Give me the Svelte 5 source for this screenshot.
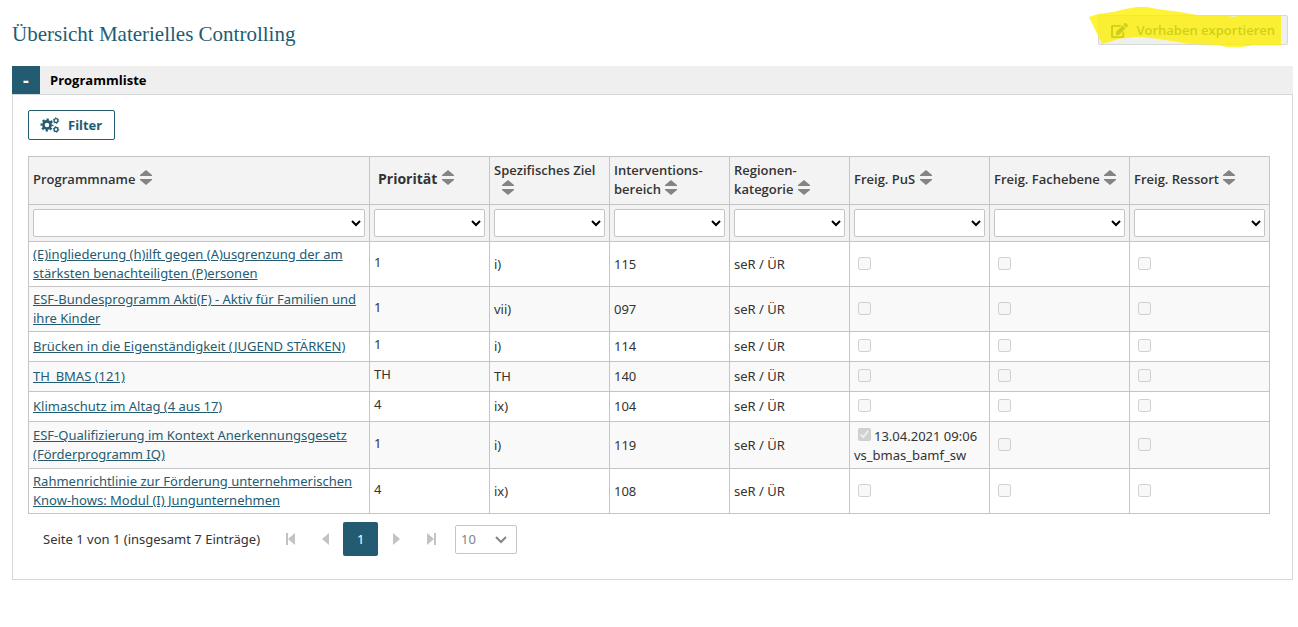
<script>
    const columns = [
        { key: "name", lines: ["Programmname"] },
        { key: "prio", lines: ["Priorität"] },
        { key: "ziel", lines: ["Spezifisches Ziel", "\u00a0"] },
        { key: "bereich", lines: ["Interventions-", "bereich"] },
        { key: "region", lines: ["Regionen-", "kategorie"] },
        { key: "pus", lines: ["Freig. PuS"] },
        { key: "fach", lines: ["Freig. Fachebene"] },
        { key: "ressort", lines: ["Freig. Ressort"] },
    ]

    const rows = [
        { name: ["(E)ingliederung (h)ilft gegen (A)usgrenzung der am", "stärksten benachteiligten (P)ersonen"], prio: "1", ziel: "i)", bereich: "115" },
        { name: ["ESF-Bundesprogramm Akti(F) - Aktiv für Familien und", "ihre Kinder"], prio: "1", ziel: "vii)", bereich: "097" },
        { name: ["Brücken in die Eigenständigkeit (JUGEND STÄRKEN)"], prio: "1", ziel: "i)", bereich: "114" },
        { name: ["TH_BMAS (121)"], prio: "TH", ziel: "TH", bereich: "140" },
        { name: ["Klimaschutz im Altag (4 aus 17)"], prio: "4", ziel: "ix)", bereich: "104" },
        { name: ["ESF-Qualifizierung im Kontext Anerkennungsgesetz", "(Förderprogramm IQ)"], prio: "1", ziel: "i)", bereich: "119", pus: ["13.04.2021 09:06", "vs_bmas_bamf_sw"] },
        { name: ["Rahmenrichtlinie zur Förderung unternehmerischen", "Know-hows: Modul (I) Jungunternehmen"], prio: "4", ziel: "ix)", bereich: "108" },
    ]

    let open = $state(true)
</script>

{#snippet sortIcon()}
    <svg class="sort" viewBox="0 0 12 15" width="12" height="15" aria-hidden="true">
        <path d="M6 0L12 5V6H0V5Z M0 9H12V10L6 15L0 10Z" />
    </svg>
{/snippet}

<main>
    <header class="top">
        <h1>Übersicht Materielles Controlling</h1>
        <div class="export-wrapper">
            <button class="export" disabled>
                <svg viewBox="0 0 576 512" width="17" height="15" aria-hidden="true">
                    <path d="M402.6 83.2l90.2 90.2c3.8 3.8 3.8 10 0 13.8L274.4 405.6l-92.8 10.3c-12.4 1.4-22.9-9.1-21.5-21.5l10.3-92.8L388.8 83.2c3.8-3.8 10-3.8 13.8 0zm162-22.9l-48.8-48.8c-15.2-15.2-39.9-15.2-55.2 0l-35.4 35.4c-3.8 3.8-3.8 10 0 13.8l90.2 90.2c3.8 3.8 10 3.8 13.8 0l35.4-35.4c15.2-15.3 15.2-40 0-55.2zM384 346.2V448H64V128h229.8c3.2 0 6.2-1.3 8.5-3.5l40-40c7.6-7.6 2.2-20.5-8.5-20.5H48C21.5 64 0 85.5 0 112v352c0 26.5 21.5 48 48 48h352c26.5 0 48-21.5 48-48V306.2c0-10.7-12.9-16-20.5-8.5l-40 40c-2.2 2.3-3.5 5.3-3.5 8.5z" />
                </svg>
                Vorhaben exportieren
            </button>
            <!-- marker stroke over the button -->
            <svg class="marker" viewBox="0 0 192 41" width="192" height="41" aria-hidden="true">
                <path d="M0 10L9 7L24 5L36 2L48 0H58L68 2L91 5L108 8H133L140 9L144 10L148 9L156 8H192V38H166L153 40H138L128 38L101 37L76 33L62 31L53 30H46L29 32L20 35L13 37Z" />
            </svg>
        </div>
    </header>

    <section>
        <div class="bar">
            <button class="toggle" aria-label="Programmliste ein- oder ausklappen" onclick={() => (open = !open)}>{open ? "-" : "+"}</button>
            <h2>Programmliste</h2>
        </div>

        {#if open}
            <div class="panel">
                <button class="filter">
                    <svg viewBox="0 0 20 16" width="20" height="16" aria-hidden="true">
                        <g fill="none">
                            <circle cx="7" cy="8" r="3.6" stroke-width="2.6" />
                            <circle cx="7" cy="8" r="5.5" stroke-width="2" stroke-dasharray="2.3 2.02" stroke-dashoffset="1.15" />
                            <circle cx="16" cy="3.6" r="1.9" stroke-width="1.3" />
                            <circle cx="16" cy="3.6" r="2.8" stroke-width="1" stroke-dasharray="1.3 1.63" />
                            <circle cx="16" cy="12.4" r="1.9" stroke-width="1.3" />
                            <circle cx="16" cy="12.4" r="2.8" stroke-width="1" stroke-dasharray="1.3 1.63" />
                        </g>
                    </svg>
                    Filter
                </button>

                <table>
                    <colgroup>
                        {#each columns as col}
                            <col class={col.key} />
                        {/each}
                    </colgroup>
                    <thead>
                        <tr class="titles">
                            {#each columns as col}
                                <th class={col.key} scope="col">
                                    {#each col.lines as line, i}
                                        {#if i > 0}<br />{/if}{line}
                                    {/each}
                                    {@render sortIcon()}
                                </th>
                            {/each}
                        </tr>
                        <tr class="filters">
                            {#each columns as col}
                                <td>
                                    <select aria-label={col.lines.join(" ")}><option></option></select>
                                </td>
                            {/each}
                        </tr>
                    </thead>
                    <tbody>
                        {#each rows as row}
                            <tr>
                                <td>
                                    <a href="#programm">{row.name[0]}{#if row.name[1]}<br />{row.name[1]}{/if}</a>
                                </td>
                                <td class="prio">{row.prio}</td>
                                <td>{row.ziel}</td>
                                <td>{row.bereich}</td>
                                <td>seR / ÜR</td>
                                <td>
                                    {#if row.pus}
                                        <label><input type="checkbox" checked disabled />{row.pus[0]}<br />{row.pus[1]}</label>
                                    {:else}
                                        <input type="checkbox" aria-label="Freig. PuS" disabled />
                                    {/if}
                                </td>
                                <td><input type="checkbox" aria-label="Freig. Fachebene" disabled /></td>
                                <td><input type="checkbox" aria-label="Freig. Ressort" disabled /></td>
                            </tr>
                        {/each}
                    </tbody>
                </table>

                <nav>
                    <span class="count">Seite 1 von 1 (insgesamt 7 Einträge)</span>
                    <button class="page" aria-label="Erste Seite" disabled>
                        <svg viewBox="0 0 10 12" width="10" height="12"><path d="M0 0H2V12H0Z M9 0V12L2 6Z" /></svg>
                    </button>
                    <button class="page" aria-label="Vorherige Seite" disabled>
                        <svg viewBox="0 0 10 12" width="10" height="12"><path d="M8 0V12L1 6Z" /></svg>
                    </button>
                    <button class="page current">1</button>
                    <button class="page" aria-label="Nächste Seite" disabled>
                        <svg viewBox="0 0 10 12" width="10" height="12"><path d="M2 0V12L9 6Z" /></svg>
                    </button>
                    <button class="page" aria-label="Letzte Seite" disabled>
                        <svg viewBox="0 0 10 12" width="10" height="12"><path d="M1 0V12L8 6Z M8 0H10V12H8Z" /></svg>
                    </button>
                    <div class="size">
                        <select aria-label="Einträge pro Seite"><option>10</option></select>
                        <svg viewBox="0 0 12 8" width="12" height="8" aria-hidden="true"><path d="M1 1L6 6L11 1" /></svg>
                    </div>
                </nav>
            </div>
        {/if}
    </section>
</main>

<style>
    :global(body) {
        background: #fff;
    }

    main {
        padding: 14px 5px 0 12px;
        font-family: "Noto Sans", "Open Sans", sans-serif;
        font-size: 13px;
        line-height: 19px;
        color: #333;
    }

    button, select {
        font: inherit;
        box-sizing: border-box;
    }

    .top {
        display: flex;
        justify-content: space-between;
        align-items: flex-start;
        height: 52px;
        padding-right: 5px;
    }

    h1 {
        margin: 6px 0 0;
        font-family: "Liberation Serif", serif;
        font-size: 21px;
        line-height: 28px;
        font-weight: 400;
        color: #235c72;
    }

    .export-wrapper {
        position: relative;
        margin-top: 1px;
    }

    .export {
        display: flex;
        align-items: center;
        gap: 8px;
        height: 30px;
        padding: 0 12px;
        border: 1px solid #d8d8d8;
        border-radius: 2px;
        background: #efefef;
        color: #235c72;
        font-family: "Open Sans", "Noto Sans", sans-serif;
        font-weight: 600;
    }

    .export svg {
        fill: currentColor;
    }

    .marker {
        position: absolute;
        right: 7px;
        top: -8px;
        fill: #fff000;
        opacity: 0.78;
        pointer-events: none;
    }

    .bar {
        display: flex;
        align-items: center;
        gap: 10px;
        background: #efefef;
    }

    .toggle {
        width: 28px;
        height: 28px;
        padding: 0;
        border: none;
        background: #235c72;
        color: #fff;
        font-size: 18px;
        font-weight: 700;
    }

    h2 {
        margin: 0;
        font-family: "Open Sans", "Noto Sans", sans-serif;
        font-size: 13px;
        font-weight: 700;
        color: #000;
    }

    .panel {
        padding: 15px 22px 23px 15px;
        border: 1px solid #d5d8d8;
    }

    .filter {
        display: flex;
        align-items: center;
        gap: 8px;
        height: 30px;
        margin-bottom: 16px;
        padding: 0 12px 0 11px;
        border: 1px solid #235c72;
        border-radius: 2px;
        background: #fff;
        color: #235c72;
        font-weight: 700;
    }

    .filter svg {
        stroke: currentColor;
    }

    table {
        width: 100%;
        table-layout: fixed;
        border-collapse: collapse;
    }

    col.prio, col.ziel, col.bereich, col.region {
        width: 120px;
    }

    col.pus, col.fach, col.ressort {
        width: 140px;
    }

    th, td {
        box-sizing: border-box;
        height: 30px;
        padding: 3px 4px;
        border: 1px solid #c5c5c5;
        text-align: left;
        vertical-align: middle;
    }

    thead {
        background: #f3f3f3;
    }

    .titles th {
        height: 48px;
        padding: 0 4px 2px;
        font-family: "Open Sans", "Noto Sans", sans-serif;
        font-weight: 600;
        white-space: nowrap;
    }

    .titles th.prio {
        padding: 0 8px 5px;
        font-size: 14px;
        font-weight: 700;
    }

    .filters td {
        height: 37px;
    }

    .filters select {
        display: block;
        width: 100%;
        height: 28px;
        border: 1px solid #c5c5c5;
        border-radius: 2px;
        background: #fff;
        color: #000;
    }

    .sort {
        margin-left: 1px;
        vertical-align: -1px;
        fill: #848484;
    }

    tbody tr:nth-child(even) {
        background: #f9f9f9;
    }

    tbody td {
        white-space: nowrap;
    }

    td.prio {
        padding-bottom: 7px;
    }

    a {
        color: #235c72;
    }

    input {
        margin: 3px 3px 3px 4px;
    }

    nav {
        display: flex;
        align-items: center;
        margin-top: 8px;
        padding-left: 15px;
    }

    .count {
        margin-right: 13px;
    }

    .page {
        display: flex;
        align-items: center;
        justify-content: center;
        width: 35px;
        height: 34px;
        padding: 0;
        border: none;
        border-radius: 2px;
        background: none;
    }

    .page svg {
        fill: #c3c3c3;
    }

    .current {
        background: #235c72;
        color: #fff;
    }

    .size {
        position: relative;
        margin-left: 7px;
    }

    .size select {
        appearance: none;
        display: block;
        width: 62px;
        height: 29px;
        padding: 0 5px;
        border: 1px solid #c5c5c5;
        border-radius: 2px;
        background: #fff;
        color: #848484;
    }

    .size svg {
        position: absolute;
        right: 10px;
        top: 11px;
        fill: none;
        stroke: #848484;
        stroke-width: 2;
        pointer-events: none;
    }
</style>
